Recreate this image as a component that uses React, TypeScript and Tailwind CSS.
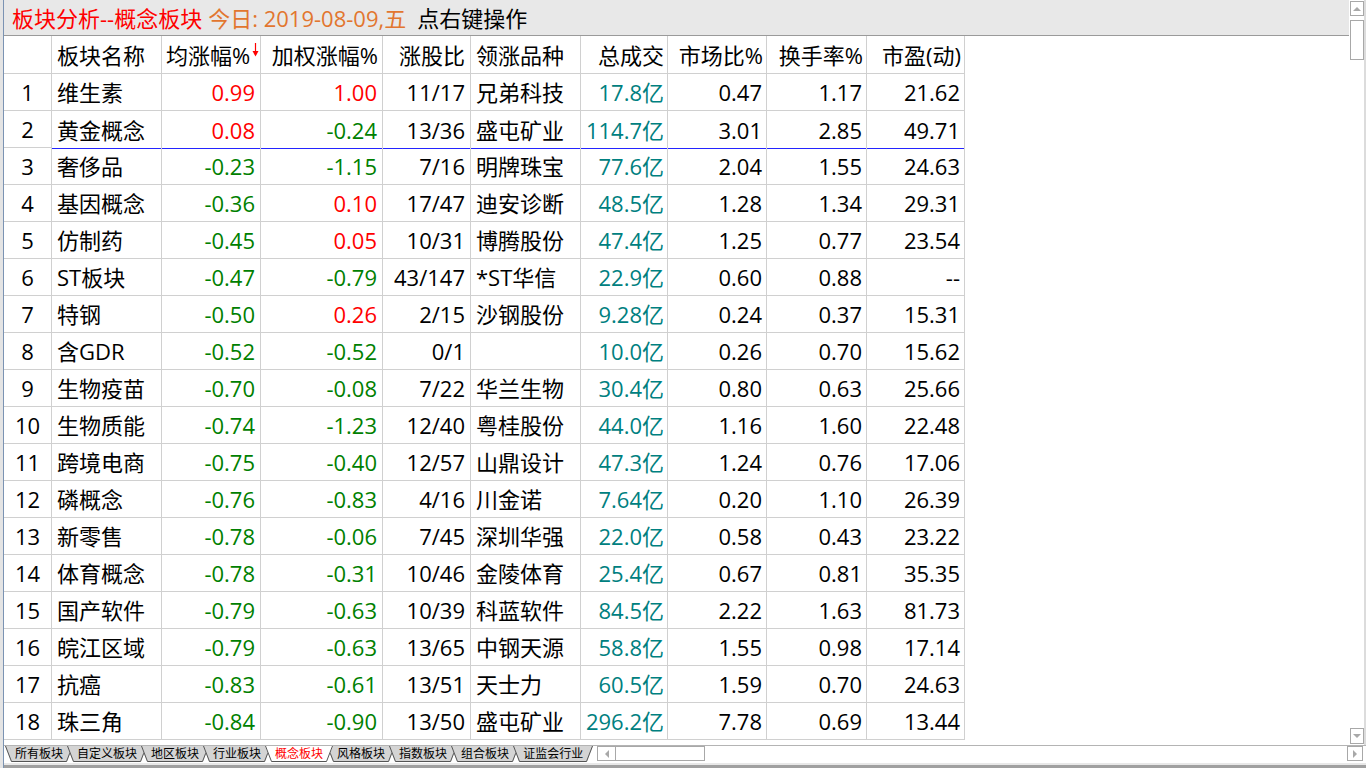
import React from 'react';

type Row = {
  name: string;
  avg: string;
  wtd: string;
  ratio: string;
  lead: string;
  amount: string;
  market: string;
  turnover: string;
  pe: string;
};

const rows: Row[] = [
  { name: '维生素', avg: '0.99', wtd: '1.00', ratio: '11/17', lead: '兄弟科技', amount: '17.8亿', market: '0.47', turnover: '1.17', pe: '21.62' },
  { name: '黄金概念', avg: '0.08', wtd: '-0.24', ratio: '13/36', lead: '盛屯矿业', amount: '114.7亿', market: '3.01', turnover: '2.85', pe: '49.71' },
  { name: '奢侈品', avg: '-0.23', wtd: '-1.15', ratio: '7/16', lead: '明牌珠宝', amount: '77.6亿', market: '2.04', turnover: '1.55', pe: '24.63' },
  { name: '基因概念', avg: '-0.36', wtd: '0.10', ratio: '17/47', lead: '迪安诊断', amount: '48.5亿', market: '1.28', turnover: '1.34', pe: '29.31' },
  { name: '仿制药', avg: '-0.45', wtd: '0.05', ratio: '10/31', lead: '博腾股份', amount: '47.4亿', market: '1.25', turnover: '0.77', pe: '23.54' },
  { name: 'ST板块', avg: '-0.47', wtd: '-0.79', ratio: '43/147', lead: '*ST华信', amount: '22.9亿', market: '0.60', turnover: '0.88', pe: '--' },
  { name: '特钢', avg: '-0.50', wtd: '0.26', ratio: '2/15', lead: '沙钢股份', amount: '9.28亿', market: '0.24', turnover: '0.37', pe: '15.31' },
  { name: '含GDR', avg: '-0.52', wtd: '-0.52', ratio: '0/1', lead: '', amount: '10.0亿', market: '0.26', turnover: '0.70', pe: '15.62' },
  { name: '生物疫苗', avg: '-0.70', wtd: '-0.08', ratio: '7/22', lead: '华兰生物', amount: '30.4亿', market: '0.80', turnover: '0.63', pe: '25.66' },
  { name: '生物质能', avg: '-0.74', wtd: '-1.23', ratio: '12/40', lead: '粤桂股份', amount: '44.0亿', market: '1.16', turnover: '1.60', pe: '22.48' },
  { name: '跨境电商', avg: '-0.75', wtd: '-0.40', ratio: '12/57', lead: '山鼎设计', amount: '47.3亿', market: '1.24', turnover: '0.76', pe: '17.06' },
  { name: '磷概念', avg: '-0.76', wtd: '-0.83', ratio: '4/16', lead: '川金诺', amount: '7.64亿', market: '0.20', turnover: '1.10', pe: '26.39' },
  { name: '新零售', avg: '-0.78', wtd: '-0.06', ratio: '7/45', lead: '深圳华强', amount: '22.0亿', market: '0.58', turnover: '0.43', pe: '23.22' },
  { name: '体育概念', avg: '-0.78', wtd: '-0.31', ratio: '10/46', lead: '金陵体育', amount: '25.4亿', market: '0.67', turnover: '0.81', pe: '35.35' },
  { name: '国产软件', avg: '-0.79', wtd: '-0.63', ratio: '10/39', lead: '科蓝软件', amount: '84.5亿', market: '2.22', turnover: '1.63', pe: '81.73' },
  { name: '皖江区域', avg: '-0.79', wtd: '-0.63', ratio: '13/65', lead: '中钢天源', amount: '58.8亿', market: '1.55', turnover: '0.98', pe: '17.14' },
  { name: '抗癌', avg: '-0.83', wtd: '-0.61', ratio: '13/51', lead: '天士力', amount: '60.5亿', market: '1.59', turnover: '0.70', pe: '24.63' },
  { name: '珠三角', avg: '-0.84', wtd: '-0.90', ratio: '13/50', lead: '盛屯矿业', amount: '296.2亿', market: '7.78', turnover: '0.69', pe: '13.44' },
];

const tabs = ['所有板块', '自定义板块', '地区板块', '行业板块', '概念板块', '风格板块', '指数板块', '组合板块', '证监会行业'];

const upDown = (v: string) => (v.startsWith('-') ? 'text-[#008000]' : 'text-[#ff0000]');

const Tab: React.FC<{ label: string; active?: boolean; first?: boolean }> = ({ label, active, first }) => {
  const w = label.length * 12 + 20;
  return (
    <div className={`relative h-[16px] px-[10px] ${first ? '' : '-ml-[6px]'} ${active ? 'z-10' : ''}`}>
      <svg className="absolute left-0 top-0" width={w} height={16}>
        <polygon points={`0,0 ${w},0 ${w - 6},16 6,16`} fill={active ? '#ffffff' : '#d4d4d4'} />
        <polyline points={`0.5,0 6.5,15.5 ${w - 6.5},15.5 ${w - 0.5},0`} fill="none" stroke="#555555" />
      </svg>
      <span className={`relative block text-[12px] leading-[16px] whitespace-nowrap ${active ? 'text-[#ff0000]' : 'text-black'}`}>
        {label}
      </span>
    </div>
  );
};

const Tri: React.FC<{ dir: 'up' | 'down' | 'left' | 'right' }> = ({ dir }) => {
  const pts = {
    up: '0,4 8,4 4,0',
    down: '0,0 8,0 4,4',
    left: '4,0 4,8 0,4',
    right: '0,0 0,8 4,4',
  }[dir];
  const vertical = dir === 'up' || dir === 'down';
  return (
    <svg width={vertical ? 8 : 4} height={vertical ? 4 : 8}>
      <polygon points={pts} fill="#a8a8a8" />
    </svg>
  );
};

export default function App() {
  return (
    <div className="w-[1366px] h-[768px] flex overflow-hidden bg-white text-black font-['Open_Sans','Noto_Sans_CJK_SC',sans-serif]">
      {/* window frame on the left */}
      <div className="w-[3px] bg-[#e4e4e4]" />
      <div className="w-px bg-[#7b93b3]" />

      <div className="flex-1 flex flex-col">
        <div className="h-[745px] flex">
          {/* main panel */}
          <div className="w-[1345px] flex flex-col">
            <div className="h-[36px] bg-[#e8e8e8] border-b border-[#9a9a9a] flex items-center pl-[8px] text-[22px] leading-none whitespace-nowrap">
              <span className="text-[#ff0000]">板块分析--概念板块</span>
              <span className="ml-[6px] text-[#e2762f]">今日: 2019-08-09,五</span>
              <span className="ml-[11px]">点右键操作</span>
            </div>

            <div className="grid grid-cols-[48px_110px_99px_122px_88px_110px_87px_99px_100px_98px] w-[961px] text-[22px] leading-none whitespace-nowrap">
              {/* header */}
              <div className="h-[38px] border-r border-b border-[#d0d0d0]" />
              <div className="h-[38px] border-r border-b border-[#d0d0d0] flex items-center pl-[5px]">板块名称</div>
              <div className="h-[38px] border-r border-b border-[#d0d0d0] flex items-center pl-[4px] overflow-hidden">
                <span className="shrink-0">均涨幅%</span>
                <svg className="shrink-0 ml-[2px] -mt-[10px]" width={7} height={14}>
                  <line x1={3.5} y1={0} x2={3.5} y2={12} stroke="#ff0000" strokeWidth={1.2} />
                  <polygon points="0.5,8 6.5,8 3.5,13.5" fill="#ff0000" />
                </svg>
              </div>
              <div className="h-[38px] border-r border-b border-[#d0d0d0] flex items-center justify-end pr-[4px]">加权涨幅%</div>
              <div className="h-[38px] border-r border-b border-[#d0d0d0] flex items-center justify-end pr-[5px]">涨股比</div>
              <div className="h-[38px] border-r border-b border-[#d0d0d0] flex items-center pl-[5px]">领涨品种</div>
              <div className="h-[38px] border-r border-b border-[#d0d0d0] flex items-center justify-end pr-[3px]">总成交</div>
              <div className="h-[38px] border-r border-b border-[#d0d0d0] flex items-center justify-end pr-[3px]">市场比%</div>
              <div className="h-[38px] border-r border-b border-[#d0d0d0] flex items-center justify-end pr-[3px]">换手率%</div>
              <div className="h-[38px] border-r border-b border-[#d0d0d0] flex items-center justify-end pr-[3px]">市盈(动)</div>

              {rows.map((r, i) => {
                // the row under 黄金概念 carries a blue divider line
                const line = i === 1 ? 'border-r border-[#d0d0d0] shadow-[0_1px_0_#2424ff]' : 'border-r border-b border-[#d0d0d0]';
                return (
                  <React.Fragment key={i}>
                    <div className="h-[37px] border-r border-b border-[#d0d0d0] flex items-center justify-center">{i + 1}</div>
                    <div className={`h-[37px] ${line} flex items-center pl-[5px]`}>{r.name}</div>
                    <div className={`h-[37px] ${line} flex items-center justify-end pr-[5px] ${upDown(r.avg)}`}>{r.avg}</div>
                    <div className={`h-[37px] ${line} flex items-center justify-end pr-[5px] ${upDown(r.wtd)}`}>{r.wtd}</div>
                    <div className={`h-[37px] ${line} flex items-center justify-end pr-[5px]`}>{r.ratio}</div>
                    <div className={`h-[37px] ${line} flex items-center pl-[5px]`}>{r.lead}</div>
                    <div className={`h-[37px] ${line} flex items-center justify-end pr-[3px] text-[#008080]`}>{r.amount}</div>
                    <div className={`h-[37px] ${line} flex items-center justify-end pr-[4px]`}>{r.market}</div>
                    <div className={`h-[37px] ${line} flex items-center justify-end pr-[4px]`}>{r.turnover}</div>
                    <div className={`h-[37px] ${line} flex items-center justify-end pr-[4px]`}>{r.pe}</div>
                  </React.Fragment>
                );
              })}
            </div>
          </div>

          {/* vertical scrollbar */}
          <div className="w-[15px] flex flex-col">
            <div className="mt-px ml-px w-[14px] h-[15px] border border-[#a8a8a8] flex items-center justify-center">
              <Tri dir="up" />
            </div>
            <div className="mt-[4px] ml-px w-[14px] h-[40px] border border-[#a8a8a8] bg-white" />
            <div className="flex-1" />
            <div className="mb-px ml-px w-[14px] h-[16px] border border-[#a8a8a8] flex items-center justify-center">
              <Tri dir="down" />
            </div>
          </div>
          <div className="w-[2px] bg-[#dcdcdc]" />
        </div>

        {/* sheet tabs + horizontal scrollbar */}
        <div className="h-[18px] border-t border-[#b4b4b4] flex items-start">
          <div className="flex pl-px">
            {tabs.map((t, i) => (
              <Tab key={t} label={t} first={i === 0} active={t === '概念板块'} />
            ))}
          </div>
          <div className="ml-[4px] w-[108px] h-[15px] border border-[#a8a8a8] flex">
            <div className="w-[18px] border-r border-[#a8a8a8] flex items-center justify-center">
              <Tri dir="left" />
            </div>
            <div className="flex-1 bg-white" />
          </div>
          <div className="flex-1" />
          <div className="mr-[3px] w-[16px] h-[15px] border border-[#a8a8a8] flex items-center justify-center">
            <Tri dir="right" />
          </div>
        </div>
        <div className="h-[2px] bg-[#e8e8e8]" />
        <div className="h-[3px] bg-[#a0a0a0]" />
      </div>
    </div>
  );
}
